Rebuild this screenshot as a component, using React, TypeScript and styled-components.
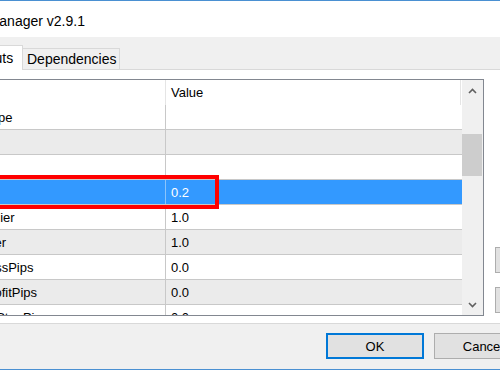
import styled, { createGlobalStyle } from 'styled-components';

const GlobalStyle = createGlobalStyle`
  html, body {
    margin: 0;
    padding: 0;
    overflow: hidden;
    background: #ffffff;
  }
  body {
    width: 500px;
    height: 371px;
    font-family: 'Liberation Sans', Arial, sans-serif;
    color: #000000;
  }
`;

interface Param {
  name: string;
  value: string;
  selected?: boolean;
}

const params: Param[] = [
  { name: 'EntryType', value: '' },
  { name: 'Info', value: '' },
  { name: 'Notes', value: '' },
  { name: 'Lots', value: '0.2', selected: true },
  { name: 'KMultiplier', value: '1.0' },
  { name: 'Multiplier', value: '1.0' },
  { name: 'StopLossPips', value: '0.0' },
  { name: 'TakeProfitPips', value: '0.0' },
  { name: 'TrailingStopPips', value: '0.0' },
];

// scroll position of the list, 0..1
const scrollFraction = 0.25;
const TRACK = 193;
const THUMB = 42;

function Chevron({ down }: { down?: boolean }) {
  return (
    <svg width="9" height="6" viewBox="0 0 9 6">
      <polyline
        points={down ? '1,1 4.5,4.5 8,1' : '1,5 4.5,1.5 8,5'}
        fill="none"
        stroke="#606060"
        strokeWidth="1.6"
      />
    </svg>
  );
}

export default function App() {
  return (
    <>
      <GlobalStyle />
      <Window>
        <TitleBar>Order Manager v2.9.1</TitleBar>
        <TabStrip>
          <Tab $active>Inputs</Tab>
          <Tab>Dependencies</Tab>
        </TabStrip>
        <TabPage>
          <ListView>
            <Grid>
              <Header>
                <HeaderCell $w={217}>Name</HeaderCell>
                <HeaderCell $w={295}>Value</HeaderCell>
              </Header>
              {params.map((p, i) => (
                <Row key={p.name} $odd={i % 2 === 1} $selected={!!p.selected}>
                  <NameCell $selected={!!p.selected}>{p.name}</NameCell>
                  <ValueCell>{p.value}</ValueCell>
                  {p.selected && <Highlight />}
                </Row>
              ))}
            </Grid>
            <ScrollBar>
              <ArrowButton>
                <Chevron />
              </ArrowButton>
              <Track>
                <Thumb style={{ marginTop: Math.round(scrollFraction * (TRACK - THUMB)) - 5 }} />
              </Track>
              <ArrowButton>
                <Chevron down />
              </ArrowButton>
            </ScrollBar>
          </ListView>
          <SideButtons>
            <SideButton>Load</SideButton>
            <SideButton>Save</SideButton>
          </SideButtons>
        </TabPage>
        <Footer>
          <Button $default>OK</Button>
          <Button>Cancel</Button>
        </Footer>
      </Window>
    </>
  );
}

const Window = styled.div`
  margin-left: -60px;
  width: 620px;
  background: #f0f0f0;
  border-top: 1px solid #4a90d2;
  border-bottom: 1px solid #4a90d2;
`;

const TitleBar = styled.div`
  height: 36px;
  box-sizing: border-box;
  padding: 3px 0 0 8px;
  display: flex;
  align-items: center;
  background: #ffffff;
  font-size: 14px;
`;

const TabStrip = styled.div`
  height: 33px;
  box-sizing: border-box;
  display: flex;
  align-items: flex-end;
  padding-left: 25px;
  border-bottom: 1px solid #d9d9d9;
  font-size: 14px;
`;

const Tab = styled.div<{ $active?: boolean }>`
  box-sizing: border-box;
  display: flex;
  align-items: center;
  white-space: nowrap;
  border: 1px solid #d9d9d9;
  border-bottom: none;
  ${(p) =>
    p.$active
      ? `
    height: 25px;
    width: 58px;
    padding: 0 8px 0 9px;
    margin-bottom: -1px;
    background: #ffffff;
  `
      : `
    height: 21px;
    width: 97px;
    padding: 0 2px 0 4px;
    border-left: none;
    background: #f0f0f0;
  `}
`;

const TabPage = styled.div`
  height: 254px;
  box-sizing: border-box;
  display: flex;
  margin-left: 2px;
  padding: 9px 0 7px 5px;
  background: #ffffff;
  border: 1px solid #d9d9d9;
  border-top: none;
`;

const ListView = styled.div`
  width: 536px;
  height: 237px;
  box-sizing: border-box;
  display: flex;
  border: 1px solid #828790;
  background: #ffffff;
  font-size: 13px;
`;

const Grid = styled.div`
  width: 513px;
  display: flex;
  flex-direction: column;
  overflow: hidden;
`;

const Header = styled.div`
  height: 25px;
  flex-shrink: 0;
  display: flex;
`;

const HeaderCell = styled.div<{ $w: number }>`
  width: ${(p) => p.$w}px;
  box-sizing: border-box;
  display: flex;
  align-items: center;
  padding-left: 5px;
  border-right: 1px solid #e5e5e5;
  white-space: nowrap;
  overflow: hidden;
`;

const Row = styled.div<{ $odd: boolean; $selected: boolean }>`
  position: relative;
  height: 25px;
  flex-shrink: 0;
  box-sizing: border-box;
  display: flex;
  border-bottom: 1px solid #c8c8c8;
  background: ${(p) => (p.$selected ? '#3399ff' : p.$odd ? '#ebebeb' : '#ffffff')};
  color: ${(p) => (p.$selected ? '#ffffff' : '#000000')};
`;

const NameCell = styled.div<{ $selected: boolean }>`
  width: 217px;
  box-sizing: border-box;
  display: flex;
  align-items: center;
  padding-left: 5px;
  border-right: 1px solid ${(p) => (p.$selected ? '#8cc4fb' : '#c8c8c8')};
  white-space: nowrap;
  overflow: hidden;
`;

const ValueCell = styled.div`
  flex: 1;
  display: flex;
  align-items: center;
  padding-left: 5px;
  white-space: nowrap;
`;

const Highlight = styled.div`
  position: absolute;
  z-index: 1;
  top: -5px;
  left: -20px;
  width: 290px;
  height: 34px;
  box-sizing: border-box;
  border: 4px solid #ff0000;
`;

const ScrollBar = styled.div`
  width: 21px;
  display: flex;
  flex-direction: column;
  background: #f0f0f0;
`;

const ArrowButton = styled.div`
  height: 21px;
  display: flex;
  align-items: center;
  justify-content: center;
`;

const Track = styled.div`
  flex: 1;
  display: flex;
  flex-direction: column;
`;

const Thumb = styled.div`
  height: ${THUMB}px;
  margin-right: 1px;
  background: #cdcdcd;
`;

const SideButtons = styled.div`
  display: flex;
  flex-direction: column;
  justify-content: flex-end;
  gap: 14px;
  margin-left: 11px;
  padding-bottom: 3px;
`;

const SideButton = styled.div`
  width: 75px;
  height: 26px;
  box-sizing: border-box;
  display: flex;
  align-items: center;
  justify-content: center;
  border: 1px solid #adadad;
  background: #e1e1e1;
  font-size: 13px;
`;

const Footer = styled.div`
  height: 45px;
  box-sizing: border-box;
  display: flex;
  justify-content: flex-end;
  align-items: flex-start;
  gap: 10px;
  padding: 9px 28px 0 0;
`;

const Button = styled.div<{ $default?: boolean }>`
  width: 98px;
  height: 26px;
  box-sizing: border-box;
  display: flex;
  align-items: center;
  justify-content: center;
  background: #e1e1e1;
  border: ${(p) => (p.$default ? '2px solid #0078d7' : '1px solid #adadad')};
  font-size: 13px;
`;
